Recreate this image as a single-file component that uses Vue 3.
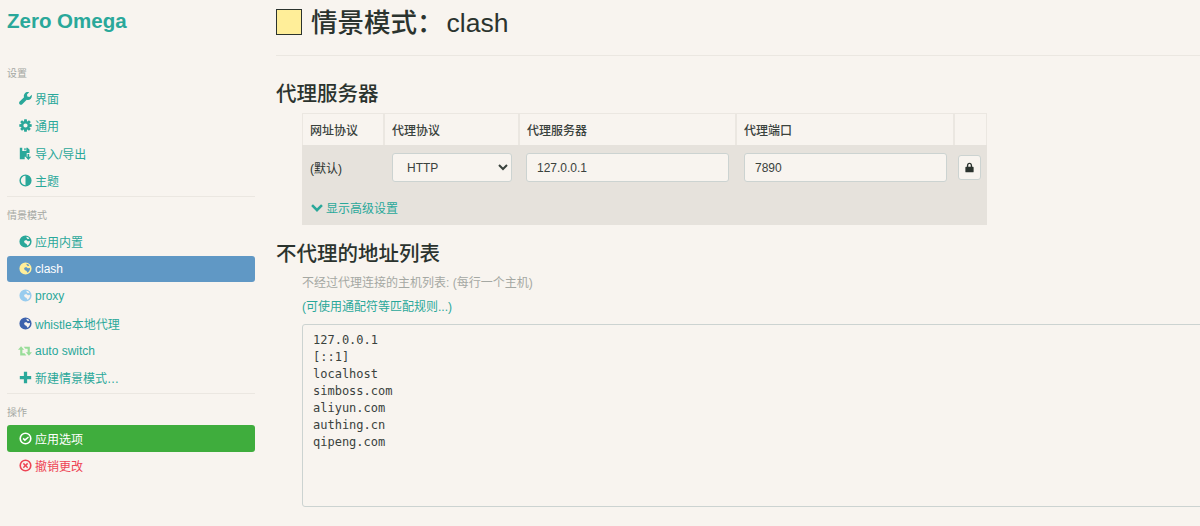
<script setup>
const gear = (() => {
  const pts = []
  const teeth = 8
  for (let i = 0; i < teeth; i++) {
    const a = (i / teeth) * Math.PI * 2
    const w = 0.2
    const spots = [[5.4, a - 0.37], [7.8, a - w], [7.8, a + w], [5.4, a + 0.37]]
    for (const [r, t] of spots) pts.push(`${(8 + r * Math.sin(t)).toFixed(2)} ${(8 - r * Math.cos(t)).toFixed(2)}`)
  }
  return `M${pts.join('L')}ZM8 5.4a2.6 2.6 0 1 0 0 5.2a2.6 2.6 0 1 0 0-5.2Z`
})()

const globe = 'M8 .5a7.500 7.500 0 1 0 0 15a7.500 7.500 0 1 0 0-15ZM9.200 2c1.400.3 2.600 1 3.500 2l-.9 1-1.600-.4-1-1.500ZM6.200 7.300 8.700 6.200 11 7.600 13.600 7.300c.2 2.500-1.200 4.700-3.300 5.800L9.300 11 7 9.800Z'

const icons = {
  wrench: 'M15.6 3.4 12.9 6.1 10.3 5.6 9.8 3 12.5.4C10.600-.3 8.500.2 7.100 1.700 5.900 3 5.600 4.800 6.200 6.400L.800 11.800C-.1 12.700-.1 14.100.800 15 1.700 15.900 3.100 15.900 4 15L9.500 9.600C11.100 10.200 13 9.900 14.300 8.600 15.700 7.200 16.200 5.200 15.600 3.400Z',
  cog: gear,
  import: 'M1 1H10.500L13 3.500V7.500H9.500V12H7V15H1ZM4 1H9V5H4ZM6.500 1.500H8.200V4H6.500ZM10.500 8.500H12.500V12H15L11.500 16 8 12H10.500Z',
  half: 'M8 .5a7.500 7.500 0 1 0 0 15a7.500 7.500 0 1 0 0-15ZM8 2.300V13.700a5.700 5.700 0 0 1 0-11.400Z',
  retweet: 'M3.500 2.500 7 6.500H5V10.500H7.500L9.500 13H2.500V6.500H0ZM12.500 13.500 9 9.500H11V5.500H8.500L6.500 3H13.500V9.500H16Z',
  plus: 'M6 1h4v5h5v4h-5v5H6v-5H1V6h5Z',
  ok: 'M8 .5a7.500 7.500 0 1 0 0 15a7.500 7.500 0 1 0 0-15ZM8 2.500a5.500 5.500 0 1 1 0 11a5.500 5.500 0 0 1 0-11ZM11.300 5.500 7.300 8.500 5.700 7.200 4.400 8.700 7.200 11.500 12.200 6.800Z',
  remove: 'M8 .5a7.500 7.500 0 1 0 0 15a7.500 7.500 0 1 0 0-15ZM8 2.500a5.500 5.500 0 1 1 0 11a5.500 5.500 0 0 1 0-11ZM6 4.700 4.700 6 6.700 8 4.700 10 6 11.300 8 9.300 10 11.300 11.300 10 9.300 8 11.300 6 10 4.700 8 6.700Z',
  chevron: 'M2.600 3 8 8.300 13.400 3 15.800 5.400 8 13.200 .2 5.400Z',
  lock: 'M8 1C5.800 1 4.200 2.700 4.200 5V7H3C2.400 7 2 7.400 2 8V14C2 14.600 2.400 15 3 15H13C13.600 15 14 14.600 14 14V8C14 7.400 13.600 7 13 7H11.800V5C11.800 2.700 10.200 1 8 1ZM6.200 7V5C6.200 3.800 6.900 3 8 3S9.800 3.800 9.800 5V7Z'
}

const groups = [
  {
    title: '设置',
    items: [
      { label: '界面', icon: 'wrench' },
      { label: '通用', icon: 'cog' },
      { label: '导入/导出', icon: 'import' },
      { label: '主题', icon: 'half' }
    ]
  },
  {
    title: '情景模式',
    items: [
      { label: '应用内置', globe: '#2aa89a' },
      { label: 'clash', globe: '#ffee99', kind: 'active' },
      { label: 'proxy', globe: '#99ccee' },
      { label: 'whistle本地代理', globe: '#3d62ad' },
      { label: 'auto switch', icon: 'retweet', iconClass: 'light-green' },
      { label: '新建情景模式…', icon: 'plus' }
    ]
  },
  {
    title: '操作',
    items: [
      { label: '应用选项', icon: 'ok', kind: 'apply' },
      { label: '撤销更改', icon: 'remove', kind: 'revert' }
    ]
  }
]

const bypass = '127.0.0.1\n[::1]\nlocalhost\nsimboss.com\naliyun.com\nauthing.cn\nqipeng.com'
</script>

<template>
  <div class="page">
    <aside class="side">
      <div class="brand">Zero Omega</div>
      <section v-for="(g, i) in groups" :key="g.title" class="group" :class="{ ruled: i < groups.length - 1 }">
        <div class="group-title">{{ g.title }}</div>
        <a v-for="it in g.items" :key="it.label" class="item" :class="it.kind">
          <svg v-if="it.globe" class="ico" viewBox="0 0 16 16">
            <path :d="globe" :fill="it.globe" fill-rule="evenodd" />
          </svg>
          <svg v-else class="ico" :class="it.iconClass" viewBox="0 0 16 16">
            <path :d="icons[it.icon]" fill="currentColor" fill-rule="evenodd" />
          </svg>
          <span>{{ it.label }}</span>
        </a>
      </section>
    </aside>

    <main class="main">
      <header class="head">
        <span class="swatch"></span>
        <h1>情景模式：<span class="name">clash</span></h1>
      </header>

      <h2 class="h-proxy">代理服务器</h2>
      <div class="tbl">
        <div class="row thead">
          <div class="c c1">网址协议</div>
          <div class="c c2">代理协议</div>
          <div class="c c3">代理服务器</div>
          <div class="c c4">代理端口</div>
          <div class="c c5"></div>
        </div>
        <div class="tbody">
          <div class="row">
            <div class="c c1">(默认)</div>
            <div class="c c2">
              <select class="field sel"><option>HTTP</option></select>
            </div>
            <div class="c c3"><input class="field" value="127.0.0.1" /></div>
            <div class="c c4"><input class="field" value="7890" /></div>
            <div class="c c5">
              <button class="lock" type="button" aria-label="lock">
                <svg viewBox="0 0 16 16"><path :d="icons.lock" fill="currentColor" fill-rule="evenodd" /></svg>
              </button>
            </div>
          </div>
          <a class="adv">
            <svg viewBox="0 0 16 16"><path :d="icons.chevron" fill="currentColor" /></svg>
            <span>显示高级设置</span>
          </a>
        </div>
      </div>

      <h2 class="h-bypass">不代理的地址列表</h2>
      <div class="block">
        <p class="hint">不经过代理连接的主机列表: (每行一个主机)</p>
        <a class="wild">(可使用通配符等匹配规则...)</a>
        <textarea class="list" readonly :value="bypass"></textarea>
      </div>
    </main>
  </div>
</template>

<style>
html, body { background: #f8f4ef; overflow: hidden; }
</style>

<style scoped>
.page {
  display: flex;
  width: 1200px;
  height: 526px;
  overflow: hidden;
  background: #f8f4ef;
  color: #2b332e;
  font-family: "Liberation Sans", "Noto Sans CJK SC", sans-serif;
  font-size: 12px;
}
.side {
  flex: 0 0 262px;
  box-sizing: border-box;
  padding: 0 7px;
}
.brand {
  height: 42px;
  line-height: 42px;
  font-size: 20.500px;
  font-weight: 700;
  color: #2aa89a;
}
.group {
  padding-bottom: 1.500px;
}
.group:nth-of-type(1) { padding-top: 25px; }
.group.ruled { border-bottom: 1px solid #ebe7e1; margin-bottom: 12px; }
.group + .group { padding-bottom: 1px; }
.group-title {
  height: 14px;
  line-height: 14px;
  font-size: 10px;
  color: #a5a8a3;
  margin-bottom: 4.500px;
}
.group + .group .group-title { margin-bottom: 5px; }
.item {
  display: flex;
  align-items: center;
  gap: 3px;
  height: 26px;
  margin-bottom: 1.330px;
  padding-left: 12px;
  border-radius: 3px;
  color: #2aa89a;
}
.item.active { background: #6098c5; color: #fff; }
.item.apply { background: #3fad3d; color: #fff; height: 27px; margin-bottom: .330px; }
.item.revert { color: #ee4455; }
.ico { width: 13px; height: 13px; flex: none; }
.ico.light-green { color: #99dd99; width: 14px; height: 14px; margin-left: -1px; }

.main {
  flex: 1;
  min-width: 0;
  padding-left: 14px;
  overflow: hidden;
}
.head {
  display: flex;
  align-items: center;
  gap: 9px;
  height: 56px;
  padding-bottom: 12px;
  box-sizing: border-box;
  border-bottom: 1px solid #ebe7e1;
}
.swatch {
  width: 24px;
  height: 24px;
  flex: none;
  background: #ffee99;
  border: 1px solid #2b332e;
}
h1 { margin: 3px 0 0; font-size: 26.500px; font-weight: 500; line-height: 30px; white-space: nowrap; }
.name { margin-left: 3px; }
h2 { margin: 0; font-size: 20.500px; font-weight: 500; line-height: 28px; }
.h-proxy { margin-top: 24px; margin-bottom: 5px; }
.h-bypass { margin-top: 15px; margin-bottom: 7px; }
.tbl { margin-left: 26px; width: 685px; }
.row { display: flex; }
.thead { height: 32px; box-sizing: border-box; border: 1px solid #ebe7e1; border-bottom: 0; font-weight: 500; color: #3a423d; }
.thead .c { border-right: 2px solid #ebe7e1; display: flex; align-items: center; padding-left: 7px; box-sizing: border-box; }
.thead .c5 { border-right: 0; }
.c1 { width: 82px; }
.c2 { width: 135px; }
.c3 { width: 217px; }
.c4 { width: 218px; }
.c5 { flex: 1; }
.tbody { background: #e6e2dc; height: 80px; box-sizing: border-box; padding-top: 8px; }
.tbody .c { box-sizing: border-box; display: flex; align-items: center; height: 29px; }
.tbody .c1 { padding-left: 8px; }
.tbody .c2 { padding-left: 8px; }
.tbody .c3 { padding-left: 7px; }
.tbody .c4 { padding-left: 8px; }
.tbody .c5 { padding-left: 4px; }
.field {
  box-sizing: border-box;
  height: 29px;
  border: 1px solid #ccd3d1;
  border-radius: 3px;
  background: #f8f4ef;
  color: #3a423d;
  font: 12px "Liberation Sans", "Noto Sans CJK SC", sans-serif;
  padding: 0 10px;
  outline: none;
}
.c2 .field { width: 120px; }
.c3 .field, .c4 .field { width: 203px; }
.lock {
  box-sizing: border-box;
  width: 23px;
  height: 25px;
  padding: 0;
  display: flex;
  align-items: center;
  justify-content: center;
  background: #f8f4ef;
  border: 1px solid #ccd3d1;
  border-radius: 3px;
  color: #2b332e;
}
.lock svg { width: 11px; height: 11px; }
.adv {
  display: flex;
  align-items: center;
  gap: 3px;
  margin-top: 17px;
  padding-left: 9px;
  color: #2aa89a;
}
.adv svg { width: 12px; height: 12px; }
.block { margin-left: 26px; }
.hint { margin: 0 0 7px; line-height: 17px; color: #a5a8a3; }
.wild { display: block; line-height: 17px; color: #2aa89a; margin-bottom: 8px; }
.list {
  display: block;
  box-sizing: border-box;
  width: 1000px;
  height: 183px;
  padding: 7px 10px;
  border: 1px solid #ccd3d1;
  border-radius: 3px;
  background: #f8f4ef;
  color: #3a423d;
  font: 12px/17px "DejaVu Sans Mono", monospace;
  resize: none;
  outline: none;
}
</style>
